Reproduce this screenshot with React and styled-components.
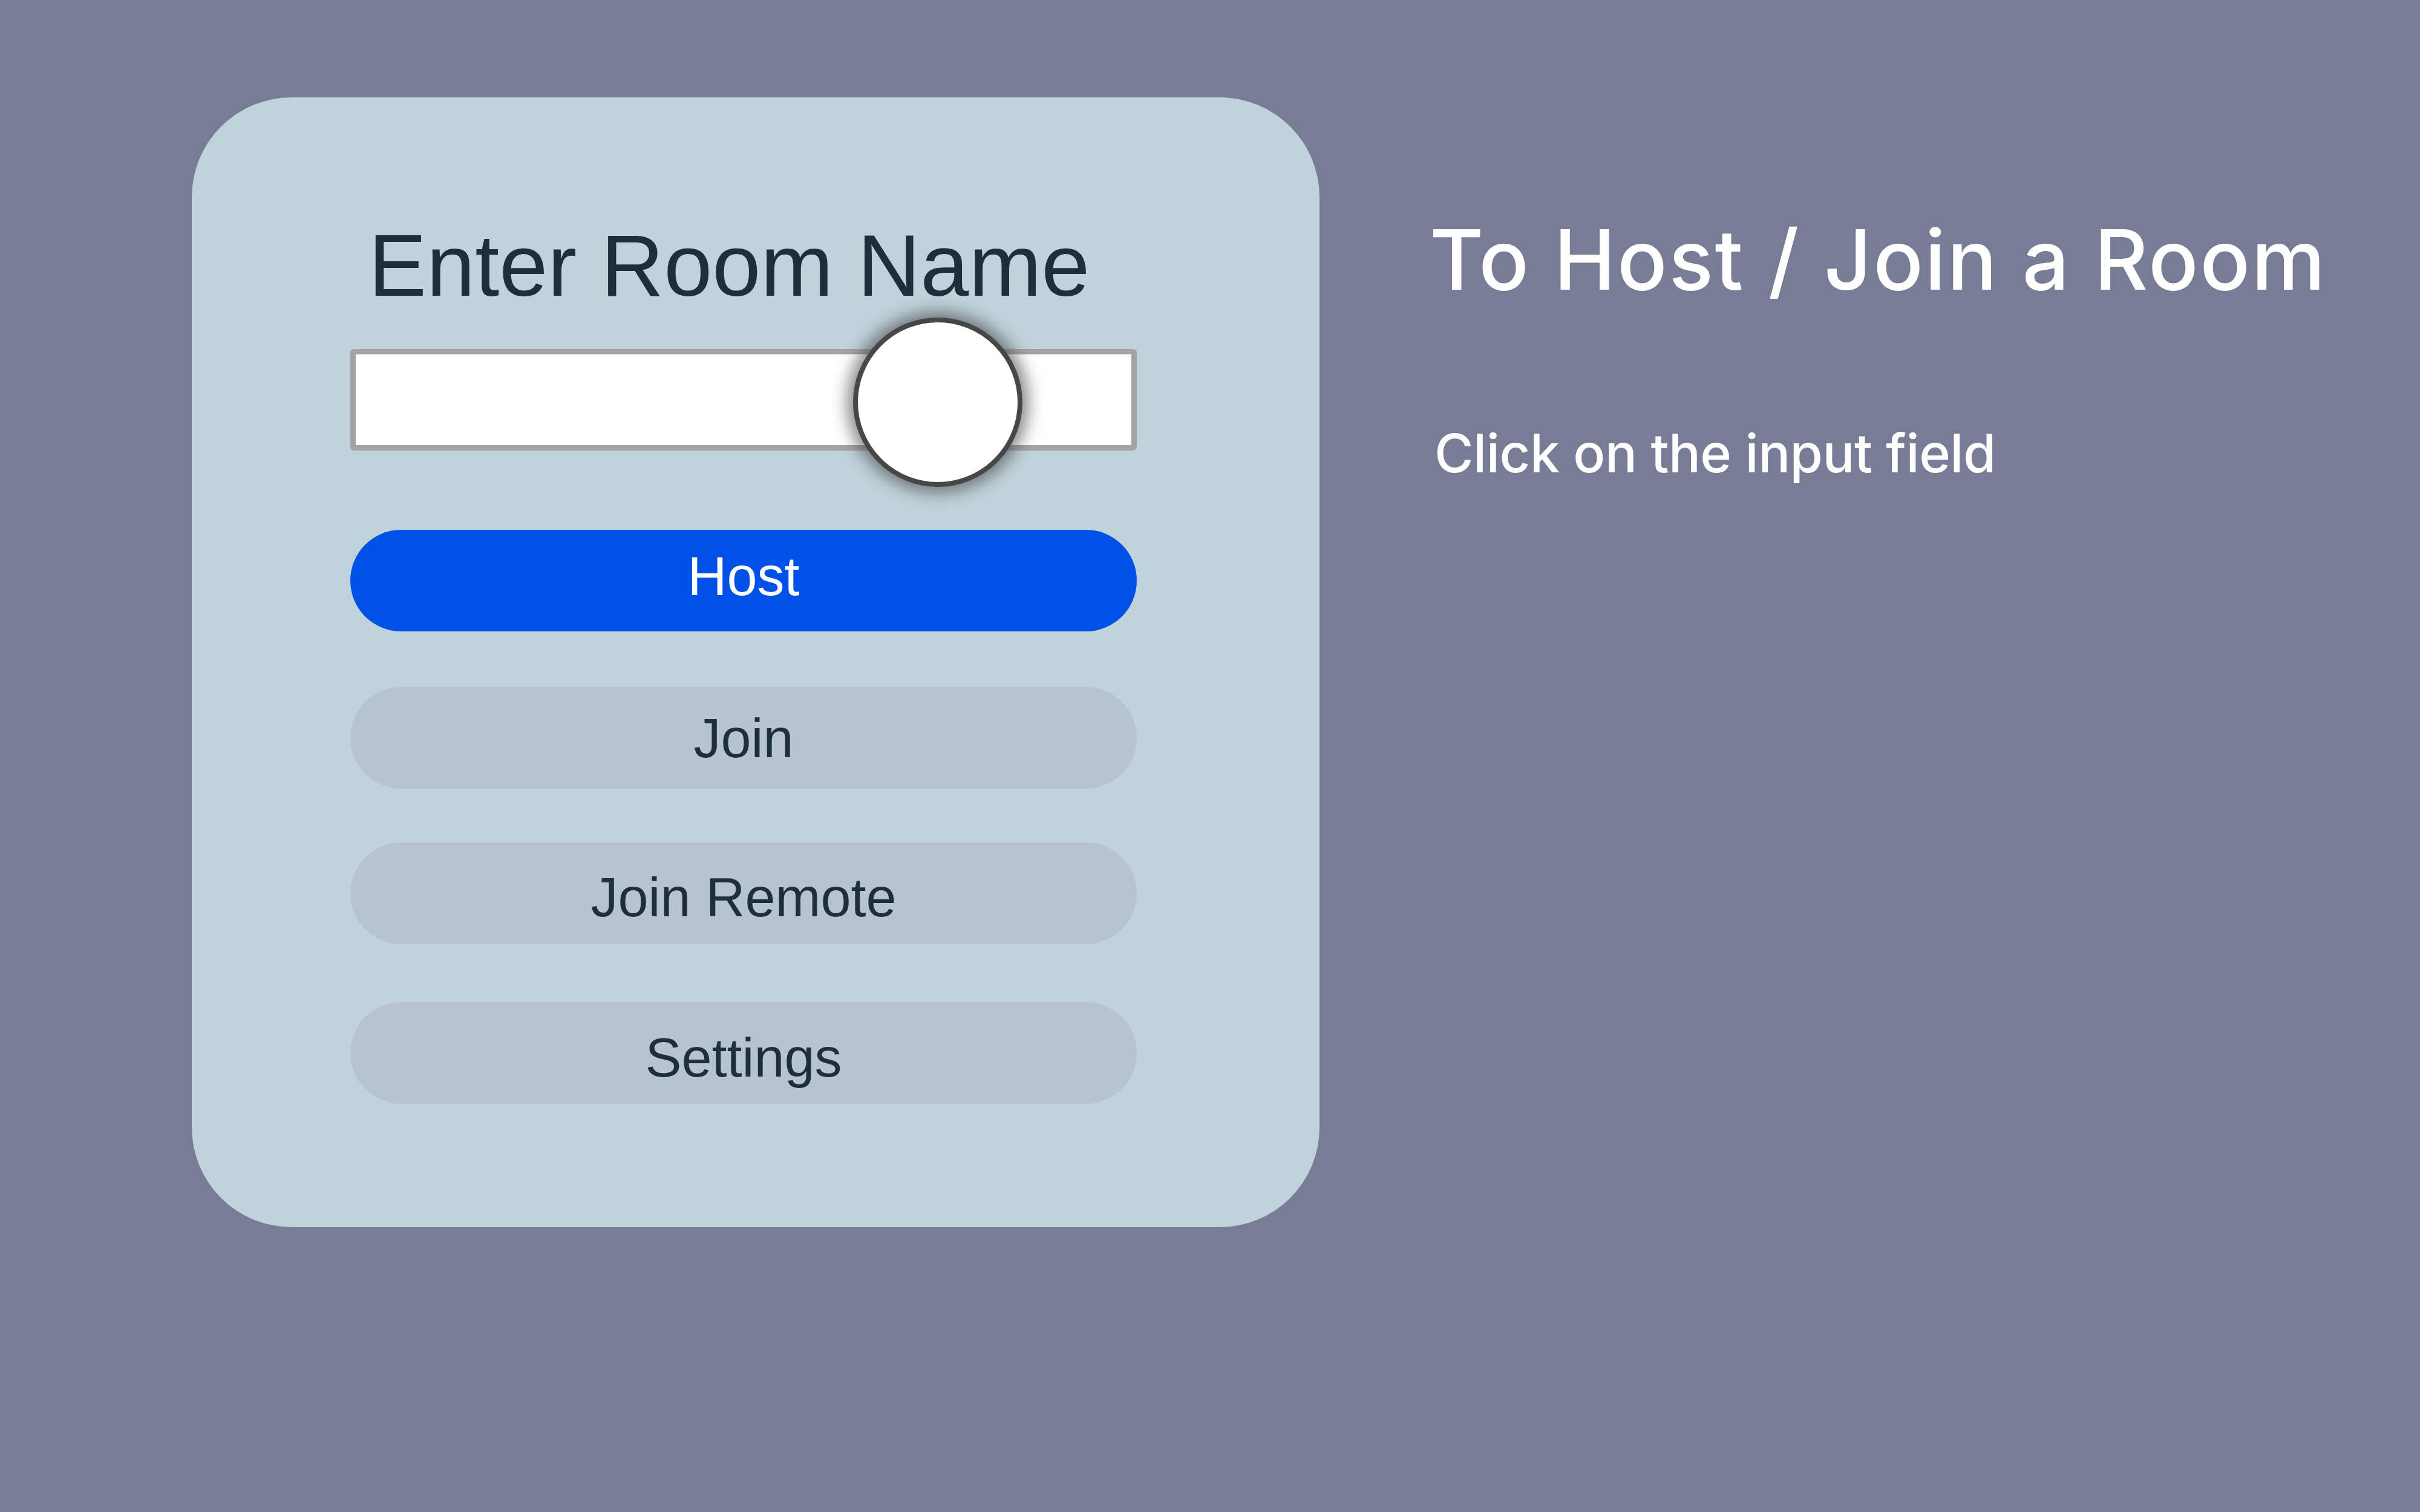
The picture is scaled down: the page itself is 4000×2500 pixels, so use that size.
import React from 'react'
import styled, { createGlobalStyle } from 'styled-components'

const GlobalStyle = createGlobalStyle`
  html, body {
    margin: 0;
    padding: 0;
    background-color: #767d95;
  }
  body {
    font-family: 'Liberation Sans', Arial, sans-serif;
  }
`

const StyledPage = styled.main`
  width: 4000px;
  height: 2500px;
  box-sizing: border-box;
  padding: 161px 0 0 317px;
  display: flex;
  align-items: flex-start;
`

const StyledCard = styled.section`
  width: 1864px;
  height: 1868px;
  box-sizing: border-box;
  padding: 207px 301px 0 262px;
  background-color: #c0d3da;
  border-radius: 165px;
  display: flex;
  flex-direction: column;
`

const StyledTitle = styled.h1`
  margin: 0 0 65px 0;
  padding-left: 30px;
  font-family: 'Liberation Sans', Arial, sans-serif;
  font-weight: 400;
  font-size: 144px;
  line-height: 1;
  color: #1e2f3c;
`

const StyledField = styled.div`
  position: relative;
  width: 1300px;
  height: 168px;
  margin-bottom: 131px;
`

const StyledInput = styled.input`
  width: 100%;
  height: 100%;
  box-sizing: border-box;
  border: 9px solid #a5a3a8;
  border-radius: 6px;
  background-color: #ffffff;
  outline: none;
`

// tap marker from the tutorial overlay, sits over the input
const StyledTouch = styled.span`
  position: absolute;
  left: 831px;
  top: -52px;
  width: 280px;
  height: 280px;
  box-sizing: border-box;
  border-radius: 50%;
  border: 8px solid #474747;
  background-color: #ffffff;
  box-shadow: 0 0 26px 10px rgba(60, 60, 60, 0.6);
`

const StyledButton = styled.button`
  width: 1300px;
  height: 168px;
  box-sizing: border-box;
  margin-bottom: ${({ gap }) => gap}px;
  border: none;
  border-radius: 84px;
  font-family: 'Liberation Sans', Arial, sans-serif;
  font-size: 90px;
  display: flex;
  align-items: center;
  justify-content: center;
  padding: ${({ shift }) => (shift > 0 ? shift * 2 : 0)}px 0
    ${({ shift }) => (shift < 0 ? -shift * 2 : 0)}px;
  ${({ primary }) =>
    primary
      ? 'background-color: #0052e6; color: #ffffff;'
      : 'background-color: #b7c4cf; color: #1e2f3c;'}
`

const StyledHelp = styled.aside`
  margin-left: 182px;
  padding-top: 200px;
  display: flex;
  flex-direction: column;
  color: #ffffff;
  font-family: Inter, 'Noto Sans', sans-serif;
`

const StyledHelpTitle = styled.h2`
  margin: 0 0 207px 0;
  font-size: 137px;
  font-weight: 500;
  line-height: 1;
  letter-spacing: 2.5px;
`

const StyledHelpText = styled.p`
  margin: 0 0 0 8px;
  font-size: 88px;
  font-weight: 500;
  line-height: 1;
  letter-spacing: -0.5px;
`

const buttons = [
  { label: 'Host', primary: true, gap: 92, shift: -7 },
  { label: 'Join', gap: 89, shift: 1 },
  { label: 'Join Remote', gap: 96, shift: 7 },
  { label: 'Settings', gap: 0, shift: 8 },
]

const App = () => {
  return (
    <StyledPage>
      <GlobalStyle />
      <StyledCard>
        <StyledTitle>Enter Room Name</StyledTitle>
        <StyledField>
          <StyledInput type="text" />
          <StyledTouch />
        </StyledField>
        {buttons.map((b) => (
          <StyledButton key={b.label} primary={b.primary} gap={b.gap} shift={b.shift}>
            {b.label}
          </StyledButton>
        ))}
      </StyledCard>
      <StyledHelp>
        <StyledHelpTitle>To Host / Join a Room</StyledHelpTitle>
        <StyledHelpText>Click on the input field</StyledHelpText>
      </StyledHelp>
    </StyledPage>
  )
}

export default App
